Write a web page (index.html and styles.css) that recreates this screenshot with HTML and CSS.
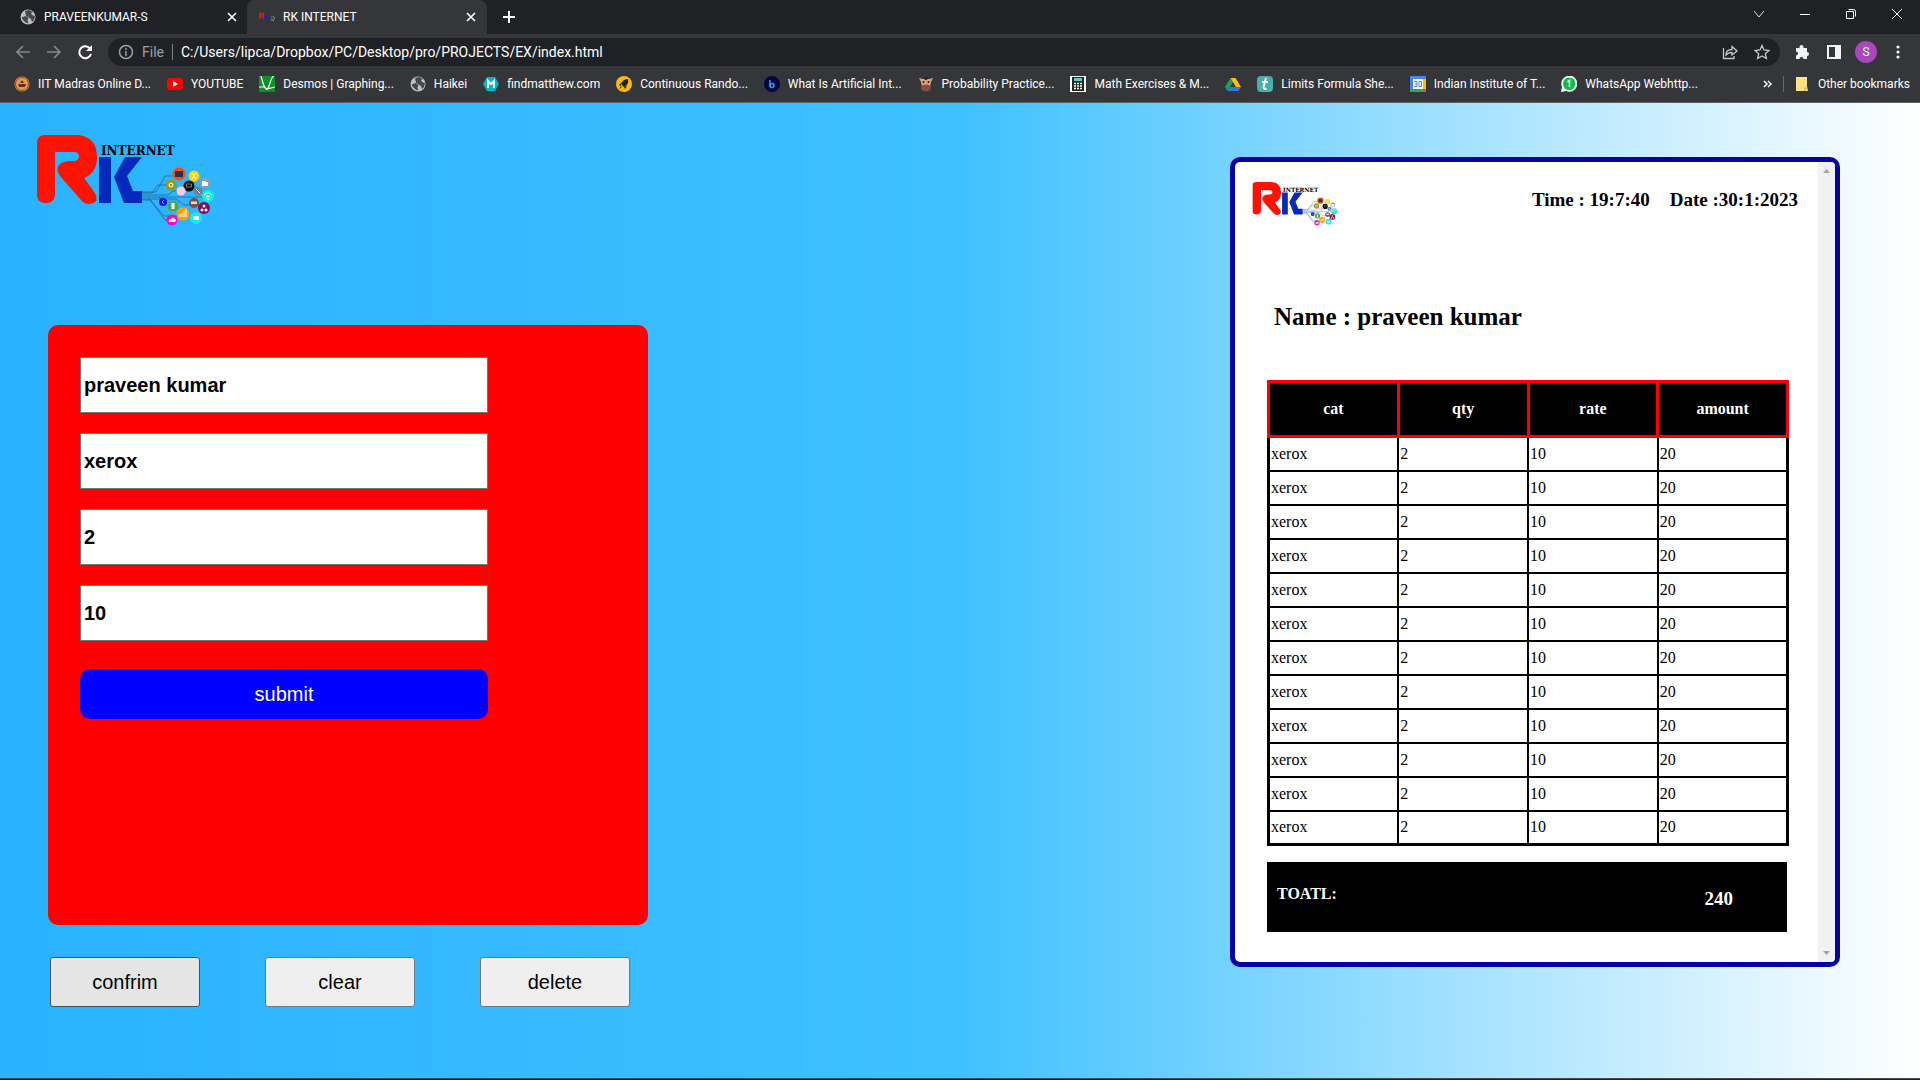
FILE: index.html
```html
<!DOCTYPE html>
<html lang="en">
<head>
<meta charset="utf-8">
<title>RK INTERNET</title>
<link rel="stylesheet" href="styles.css">
</head>
<body>
<svg class="defs" aria-hidden="true">
  <symbol id="globe" viewBox="0 0 16 16"><circle cx="8" cy="8" r="7.500" fill="#bdc1c6"/><path d="M1.500 8.500l4-1.500 3 2-1 2.500 1 3-3-1-3-3zM5 2l4-1 4 2-2 1 1 2 3 1-1 4-2 2-1-3-3-2-2-1z" fill="#46484c"/></symbol>
  <symbol id="rk" viewBox="0 0 178 94">
    <path d="M0 8Q0 0 8 0H41Q60 2 60 22Q60 38 47 43L58 58Q63 68 52 69Q47 69 44 65L23 41Q18 34 23 29Q27 26 33 26H38Q42 25 42 21Q41 17 38 17H18V60Q17 68 9 68Q0 68 0 60Z" fill="#ff1200"/>
    <path d="M62 22H74V68H62ZM88 22H105L90 41L96 56H105V68H87L77 42Z" fill="#0429bd"/>
    <g transform="translate(0 -1)">
      <g fill="none" stroke="#1c4c78" stroke-opacity=".6" stroke-width="1"><path d="M105 58h14l9-16h14M105 59h10l6-8h12M105 61h26l5-4h9M105 63h66M105 65h34l8 6h18M105 66h8l14 16h18M112 64l16 22h8M122 63l5 5"/></g>
      <circle cx="142" cy="40" r="6.500" fill="#ff4a08"/><rect x="138" y="37" width="8" height="6" fill="#25364a"/>
      <circle cx="157" cy="42" r="5.500" fill="#ffd500"/><path d="M155 39l4 6M159 39l-4 6" stroke="#fff"/>
      <circle cx="168" cy="49" r="5" fill="#9b9b9b"/><path d="M165 47h3l1 1h2v4h-6z" fill="#fff"/>
      <circle cx="134" cy="51" r="5.500" fill="#969b12"/><circle cx="134" cy="51" r="2" fill="none" stroke="#fff"/>
      <circle cx="152" cy="52" r="5.500" fill="#080808"/><path d="M149.500 50h5v3h-5z" fill="none" stroke="#aaa" stroke-width=".7"/>
      <circle cx="144" cy="57" r="4.500" fill="#ffc9dc"/><circle cx="161" cy="57" r="4.500" fill="#6f8291"/><path d="M159 55l4 4" stroke="#fff"/>
      <circle cx="171" cy="62" r="6" fill="#10f5ce"/><path d="M167 61q4-4 8 0M169 63q2-2 4 0" fill="none" stroke="#fff"/><circle cx="171" cy="65" r="1" fill="#fff"/>
      <circle cx="126" cy="68" r="4" fill="#1414f5"/><path d="M125 68l2-2M125 68l2 2" stroke="#8af"/>
      <circle cx="136" cy="72" r="5.500" fill="#44ad4b"/><path d="M134.500 69h3v6h-3z" fill="#fff"/>
      <circle cx="157" cy="69" r="5" fill="#7c5240"/><path d="M154 67.500h6v2.500h-6z" fill="#ddd"/>
      <circle cx="167" cy="74" r="6" fill="#870e52"/><circle cx="167" cy="72" r="1.500" fill="#fff"/><circle cx="165" cy="76" r="1.500" fill="#fff"/><circle cx="169" cy="76" r="1.500" fill="#fff"/>
      <circle cx="146" cy="80" r="6.500" fill="#ffa000"/><path d="M143 83v-3M145 83v-4M147 83v-6M149 83v-8" stroke="#fff"/>
      <circle cx="159" cy="84" r="6" fill="#10eef5"/><path d="M156 82h6v4h-6z" fill="#fff"/>
      <circle cx="135" cy="86" r="5.500" fill="#ff05c8"/><path d="M132 88q-1-3 2-3 2-3 4 0 2 1 0 3z" fill="#fff"/>
    </g>
  </symbol>
</svg>

<header class="chrome">
  <div class="tabstrip">
    <div class="tab"><svg width="16" height="16"><use href="#globe"/></svg><span class="tab-title">PRAVEENKUMAR-S</span><button class="icon-btn" aria-label="Close tab"><svg width="10" height="10" viewBox="0 0 10 10"><path d="M1 1l8 8M9 1l-8 8" stroke="#fff" stroke-width="1.600"/></svg></button></div>
    <div class="tab tab-active"><svg width="16" height="16"><use href="#rk"/></svg><span class="tab-title">RK INTERNET</span><button class="icon-btn" aria-label="Close tab"><svg width="10" height="10" viewBox="0 0 10 10"><path d="M1 1l8 8M9 1l-8 8" stroke="#fff" stroke-width="1.600"/></svg></button></div>
    <button class="icon-btn new-tab" aria-label="New tab"><svg width="14" height="14" viewBox="0 0 14 14"><path d="M7 1v12M1 7h12" stroke="#fff" stroke-width="2"/></svg></button>
    <div class="window-controls">
      <button class="icon-btn" aria-label="Search tabs"><svg width="12" height="12" viewBox="0 0 12 12"><path d="M1 3l5 6 5-6" fill="none" stroke="#ddd"/></svg></button>
      <button class="icon-btn" aria-label="Minimize"><svg width="12" height="12" viewBox="0 0 12 12"><path d="M1 6.500h10" stroke="#fff"/></svg></button>
      <button class="icon-btn" aria-label="Restore"><svg width="12" height="12" viewBox="0 0 12 12"><path d="M1.500 3.500h7v7h-7zM3.500 1.500h5q2 0 2 2v5" fill="none" stroke="#fff"/></svg></button>
      <button class="icon-btn" aria-label="Close"><svg width="12" height="12" viewBox="0 0 12 12"><path d="M1 1l10 10M11 1L1 11" stroke="#fff"/></svg></button>
    </div>
  </div>
  <div class="toolbar">
    <button class="icon-btn nav" aria-label="Back"><svg width="16" height="16" viewBox="0 0 16 16"><path d="M15 8H2M8 2L2 8l6 6" fill="none" stroke="#85878a" stroke-width="1.700"/></svg></button>
    <button class="icon-btn nav" aria-label="Forward"><svg width="16" height="16" viewBox="0 0 16 16"><path d="M1 8h13M8 2l6 6-6 6" fill="none" stroke="#85878a" stroke-width="1.700"/></svg></button>
    <button class="icon-btn nav" aria-label="Reload"><svg width="16" height="16" viewBox="0 0 16 16"><path d="M13 4.500A6 6 0 1 0 14 10" fill="none" stroke="#fff" stroke-width="2"/><path d="M15 1v6H9z" fill="#fff"/></svg></button>
    <div class="omnibox">
      <svg width="16" height="16" viewBox="0 0 16 16"><circle cx="8" cy="8" r="6.500" fill="none" stroke="#9aa0a6" stroke-width="1.500"/><path d="M8 7v5M8 4v2" stroke="#9aa0a6" stroke-width="1.500"/></svg>
      <span class="scheme">File</span>
      <input class="url" aria-label="Address" value="C:/Users/lipca/Dropbox/PC/Desktop/pro/PROJECTS/EX/index.html">
      <button class="icon-btn" aria-label="Share"><svg width="16" height="16" viewBox="0 0 16 16"><path d="M1.500 4v10.500H12V12M4 11q0-5.500 6-5.500V2.500l5 4.500-5 4V8.500Q6 8.500 4 11z" fill="none" stroke="#c4c7c9" stroke-width="1.300"/></svg></button>
      <button class="icon-btn" aria-label="Bookmark"><svg width="16" height="16" viewBox="0 0 16 16"><path d="M8 1.500l2 4.500 5 .5-3.700 3.200L12.400 14.500 8 12l-4.400 2.500 1.100-4.800L1 6.500 6 6z" fill="none" stroke="#c4c7c9" stroke-width="1.300"/></svg></button>
    </div>
    <div class="actions">
      <button class="icon-btn" aria-label="Extensions"><svg width="16" height="16" viewBox="0 0 16 16"><path d="M2 4h3.500V3a2 2 0 0 1 4 0v1H13v4a2 2 0 0 1 0 4v3H9.500a2 2 0 0 0-4 0H2v-3.500a2 2 0 0 0 0-4z" fill="#f1f3f4"/></svg></button>
      <button class="icon-btn" aria-label="Side panel"><svg width="16" height="16" viewBox="0 0 16 16"><path d="M1 1h14v14H1zM3 3v10h6V3z" fill="#f1f3f4" fill-rule="evenodd"/></svg></button>
      <button class="avatar">S</button>
      <button class="icon-btn" aria-label="Menu"><svg width="16" height="16" viewBox="0 0 16 16" fill="#f1f3f4"><circle cx="8" cy="3" r="1.600"/><circle cx="8" cy="8" r="1.600"/><circle cx="8" cy="13" r="1.600"/></svg></button>
    </div>
  </div>
  <nav class="bookmarks">
    <a href="#"><svg width="16" height="16" viewBox="0 0 16 16"><circle cx="8" cy="8" r="7.500" fill="#dba24e"/><circle cx="8" cy="8" r="6.500" fill="none" stroke="#a2352b"/><path d="M4 8h8l-1 3H5zM6 7q2-5 4 0z" fill="#6d2a25"/></svg><span>IIT Madras Online D...</span></a>
    <a href="#"><svg width="16" height="16" viewBox="0 0 16 16"><rect y="2" width="16" height="12" rx="3" fill="#f00"/><path d="M6 5l5 3-5 3z" fill="#fff"/></svg><span>YOUTUBE</span></a>
    <a href="#"><svg width="16" height="16" viewBox="0 0 16 16"><path d="M0 0h16v16H0z" fill="#0b9128"/><path d="M2 0q5 20 8 10t5-10M0 11h5l3 2 8-2" fill="none" stroke="#fff" stroke-width="1.200"/></svg><span>Desmos | Graphing...</span></a>
    <a href="#"><svg width="16" height="16"><use href="#globe"/></svg><span>Haikei</span></a>
    <a href="#"><svg width="16" height="16" viewBox="0 0 16 16"><path d="M4 1h8l4 7-4 7H4L0 8z" fill="#00b8c4"/><path d="M5 12V5l3 3 3-3v7" fill="none" stroke="#fff" stroke-width="2"/></svg><span>findmatthew.com</span></a>
    <a href="#"><svg width="16" height="16" viewBox="0 0 16 16"><circle cx="8" cy="8" r="8" fill="#ffb80a"/><path d="M12 3Q7 3 5 8l3 3q5-2 4-8zM5 7L3 9l2 1zM8 11l1 2 2-3zM3 13l3-2-1-1z" fill="#222"/></svg><span>Continuous Rando...</span></a>
    <a href="#"><svg width="16" height="16" viewBox="0 0 16 16"><circle cx="8" cy="8" r="8" fill="#05053d"/><path d="M6 4v7" stroke="#18a9f5" stroke-width="1.500"/><circle cx="8" cy="9.500" r="2" fill="none" stroke="#18a9f5" stroke-width="1.500"/></svg><span>What Is Artificial Int...</span></a>
    <a href="#"><svg width="16" height="16" viewBox="0 0 16 16"><path d="M1 2l4 1h6l4-1-2 4-1 5H4L3 6z" fill="#dca07f"/><ellipse cx="8" cy="12" rx="5" ry="3.500" fill="#87513f"/><path d="M6 1h4L9 4H7z" fill="#31201c"/><circle cx="5.500" cy="6" r="1" fill="#222"/><circle cx="10.500" cy="6" r="1" fill="#222"/></svg><span>Probability Practice...</span></a>
    <a href="#"><svg width="16" height="16" viewBox="0 0 16 16"><path d="M0 0h16v16H0z" fill="#fff"/><path d="M2 1h12v14H2z" fill="#262626"/><path d="M4 2h8v3H4z" fill="#5ccad0"/><path d="M4 7.500h8M4 10h8M4 12.500h8" stroke="#fff" stroke-width="1.500" stroke-dasharray="2 1"/></svg><span>Math Exercises &amp; M...</span></a>
    <a href="#" aria-label="Drive"><svg width="16" height="16" viewBox="0 0 16 16"><path d="M5.500 2L0 11l2.500 4L8 6z" fill="#0da960"/><path d="M5.500 2h5L16 11h-5z" fill="#ffc107"/><path d="M5 11h11l-2.500 4h-11z" fill="#3777e3"/></svg></a>
    <a href="#"><svg width="16" height="16" viewBox="0 0 16 16"><rect width="16" height="16" rx="4" fill="#49b0a7"/><path d="M9 2L6.500 11q0 3 3 1.500M5 6h6" fill="none" stroke="#fff" stroke-width="2"/></svg><span>Limits Formula She...</span></a>
    <a href="#"><svg width="16" height="16" viewBox="0 0 16 16"><rect width="16" height="16" rx="1" fill="#4285f4"/><path d="M13 3h3v10h-3z" fill="#fbbc04"/><path d="M0 13h13v3H0z" fill="#34a853"/><path d="M13 13h3l-3 3z" fill="#ea4335"/><path d="M3 3h10v10H3z" fill="#fff"/><path d="M4 5.500h3v5H4M5 8h2M9 5.500h2.500v5H9z" fill="none" stroke="#4285f4"/></svg><span>Indian Institute of T...</span></a>
    <a href="#"><svg width="16" height="16" viewBox="0 0 16 16"><path d="M0 16l1-5a8 8 0 1 1 4 4z" fill="#fff"/><circle cx="8.200" cy="7.800" r="6.300" fill="#0ac244"/><path d="M6.500 6L8.500 4.500V11" fill="none" stroke="#fff" stroke-width="1.500"/></svg><span>WhatsApp Webhttp...</span></a>
    <div class="bookmarks-end">
      <button class="icon-btn" aria-label="More bookmarks"><svg width="10" height="10" viewBox="0 0 10 10"><path d="M1 2l3 3-3 3M5 2l3 3-3 3" fill="none" stroke="#fff" stroke-width="1.500"/></svg></button>
      <a href="#" class="other"><svg width="12" height="16" viewBox="0 0 12 16"><path d="M0 1h11v10l1 4H0z" fill="#ffe082"/><path d="M9 15v-3h3" fill="none" stroke="#d9ae35"/></svg><span>Other bookmarks</span></a>
    </div>
  </nav>
</header>

<main class="page">
  <section class="entry">
    <svg class="logo" viewBox="0 0 178 94" role="img" aria-label="RK Internet"><use href="#rk"/><text x="64" y="20" class="logo-word">INTERNET</text></svg>
    <form class="card">
      <input aria-label="Name" value="praveen kumar">
      <input aria-label="Category" value="xerox">
      <input aria-label="Quantity" value="2">
      <input aria-label="Rate" value="10">
      <button type="button" class="submit">submit</button>
    </form>
    <div class="buttons">
      <button class="btn btn-hover">confrim</button>
      <button class="btn">clear</button>
      <button class="btn">delete</button>
    </div>
  </section>

  <section class="bill">
    <div class="bill-body">
      <div class="bill-head">
        <svg class="logo-small" viewBox="0 0 178 94" role="img" aria-label="RK Internet"><use href="#rk"/><text x="64" y="20" class="logo-word">INTERNET</text></svg>
        <h3>Time : 19:7:40</h3>
        <h3>Date :30:1:2023</h3>
      </div>
      <h2>Name : praveen kumar</h2>
      <table>
        <thead><tr><th>cat</th><th>qty</th><th>rate</th><th>amount</th></tr></thead>
        <tbody>
          <tr><td>xerox</td><td>2</td><td>10</td><td>20</td></tr>
          <tr><td>xerox</td><td>2</td><td>10</td><td>20</td></tr>
          <tr><td>xerox</td><td>2</td><td>10</td><td>20</td></tr>
          <tr><td>xerox</td><td>2</td><td>10</td><td>20</td></tr>
          <tr><td>xerox</td><td>2</td><td>10</td><td>20</td></tr>
          <tr><td>xerox</td><td>2</td><td>10</td><td>20</td></tr>
          <tr><td>xerox</td><td>2</td><td>10</td><td>20</td></tr>
          <tr><td>xerox</td><td>2</td><td>10</td><td>20</td></tr>
          <tr><td>xerox</td><td>2</td><td>10</td><td>20</td></tr>
          <tr><td>xerox</td><td>2</td><td>10</td><td>20</td></tr>
          <tr><td>xerox</td><td>2</td><td>10</td><td>20</td></tr>
          <tr><td>xerox</td><td>2</td><td>10</td><td>20</td></tr>
        </tbody>
      </table>
      <div class="total"><h4>TOATL:</h4><h3>240</h3></div>
    </div>
    <div class="scrollbar" aria-hidden="true">
      <svg width="7" height="4" viewBox="0 0 7 4"><path d="M0 4l3.500-4L7 4z" fill="#a3a3a3"/></svg>
      <svg width="7" height="4" viewBox="0 0 7 4"><path d="M0 0l3.500 4L7 0z" fill="#a3a3a3"/></svg>
    </div>
  </section>
</main>
</body>
</html>
```

FILE: styles.css
```css
* { box-sizing: border-box; }

body {
  margin: 0;
  min-height: 100vh;
  display: flex;
  flex-direction: column;
  font-family: "Liberation Serif", "Times New Roman", serif;
  color: #000;
  background: #202124;
}

h2, h3, h4 { margin: 0; }
button { font: inherit; cursor: pointer; }
svg { display: block; flex: none; }
.defs { position: absolute; width: 0; height: 0; }

/* Browser frame */
.chrome {
  background: #35363a;
  color: #fff;
  font: 12px/16px Roboto, "Noto Sans", sans-serif;
  border-bottom: 1px solid #5f6063;
}

.icon-btn {
  display: flex;
  padding: 0;
  border: 0;
  background: none;
}

.tabstrip {
  display: flex;
  align-items: center;
  height: 34px;
  background: #202124;
}

.tab {
  display: flex;
  align-items: center;
  gap: 8px;
  width: 240px;
  height: 34px;
  padding: 0 11px 0 12px;
}
.tab:first-child { width: 247px; padding: 0 10px 0 20px; }
.tab-active { background: #35363a; border-radius: 8px 8px 0 0; }
.tab-title { flex: 1; }
.new-tab { margin-left: 15px; }

.window-controls {
  display: flex;
  gap: 34px;
  margin-left: auto;
  padding: 0 17px 6px 0;
}

.toolbar {
  display: flex;
  align-items: center;
  height: 36px;
  padding: 0 14px 0 15px;
}
.nav { margin-right: 15px; }

.omnibox {
  display: flex;
  align-items: center;
  flex: 1;
  gap: 16px;
  height: 28px;
  padding: 0 10px;
  border-radius: 14px;
  background: #202124;
  font-size: 14px;
}
.scheme {
  margin-left: -8px;
  padding-right: 8px;
  border-right: 1px solid #7d8084;
  color: #9aa0a6;
}
.url {
  flex: 1;
  margin-left: -8px;
  padding: 0;
  border: 0;
  background: none;
  color: #fff;
  font: inherit;
}

.actions {
  display: flex;
  align-items: center;
  gap: 16px;
  padding-left: 14px;
}
.avatar {
  width: 22px;
  height: 22px;
  margin: 0 -3px;
  padding: 0;
  border: 0;
  border-radius: 50%;
  background: #ab47bc;
  color: #fff;
}

.bookmarks {
  display: flex;
  align-items: center;
  gap: 16px;
  height: 32px;
  padding: 0 10px 4px 14px;
}
.bookmarks a {
  display: flex;
  gap: 8px;
  color: #fff;
  text-decoration: none;
  white-space: nowrap;
}
.bookmarks-end {
  display: flex;
  align-items: center;
  gap: 10px;
  margin-left: auto;
}
.bookmarks .other { gap: 10px; padding-left: 12px; border-left: 1px solid #65676a; }

/* Billing page */
.page {
  flex: 1;
  display: flex;
  justify-content: space-between;
  align-items: flex-start;
  padding: 32px 80px 71px 37px;
  border-bottom: 1px solid #4a4b4e;
  margin-bottom: 1px;
  background: linear-gradient(to right, #2ab2ff, #3fc1ff 50%, #ffffff);
}

.entry { padding-right: 40px; }
.logo { width: 178px; height: 94px; }
.logo-word { font: bold 12px "DejaVu Serif", serif; fill: #000; }

.card {
  display: flex;
  flex-direction: column;
  gap: 20px;
  width: 600px;
  height: 600px;
  margin: 96px 0 0 11px;
  padding: 32px;
  border-radius: 10px;
  background: #f00;
}
.card input {
  width: 408px;
  height: 56px;
  padding: 0 3px;
  border: 1px solid #767676;
  background: #fff;
  color: #000;
  font: bold 20px "Liberation Sans", Arial, sans-serif;
}
.submit {
  width: 408px;
  height: 50px;
  margin-top: 8px;
  border: 0;
  border-radius: 10px;
  background: #00f;
  color: #fff;
  font: 20px "Liberation Sans", Arial, sans-serif;
}

.buttons {
  display: flex;
  gap: 65px;
  padding: 32px 0 0 13px;
}
.btn {
  width: 150px;
  height: 50px;
  border: 1px solid #767676;
  border-radius: 3px;
  background: #efefef;
  color: #000;
  font: 20px "Liberation Sans", Arial, sans-serif;
}
.btn-hover { background: #e5e5e5; border-color: #4f4f4f; }

.bill {
  display: flex;
  width: 610px;
  min-height: 810px;
  margin-top: 22px;
  border: 5px solid #0404a4;
  border-radius: 10px;
  background: #fff;
}
.bill-body { flex: 1; padding: 20px 20px 30px 17px; }
.bill-head {
  display: flex;
  gap: 20px;
  height: 121px;
}
.bill-head h3 { padding-top: 7px; }
.logo-small { width: 86px; height: 45px; margin-right: auto; }
h2 { padding-left: 22px; font-size: 25px; line-height: 28px; }
h3 { font-size: 19px; line-height: 22px; }
h4 { font-size: 16px; line-height: 20px; }

table {
  width: 522px;
  margin: 49px 0 0 15px;
  border-collapse: collapse;
  table-layout: fixed;
  border: 3px solid #000;
  font-size: 16px;
}
th {
  height: 55px;
  padding: 0;
  border: 3px solid #f00;
  background: #000;
  color: #fff;
}
td {
  height: 34px;
  padding: 0 1px;
  border: 2px solid #000;
}

.total {
  display: flex;
  justify-content: space-between;
  width: 520px;
  height: 70px;
  margin: 16px 0 0 15px;
  padding: 22px 54px 0 10px;
  background: #000;
  color: #fff;
}
.total h3 { padding-top: 4px; }

.scrollbar {
  display: flex;
  flex-direction: column;
  justify-content: space-between;
  align-items: center;
  width: 17px;
  padding: 7px 0;
  border-radius: 0 4px 4px 0;
  background: #f1f1f1;
}
```
